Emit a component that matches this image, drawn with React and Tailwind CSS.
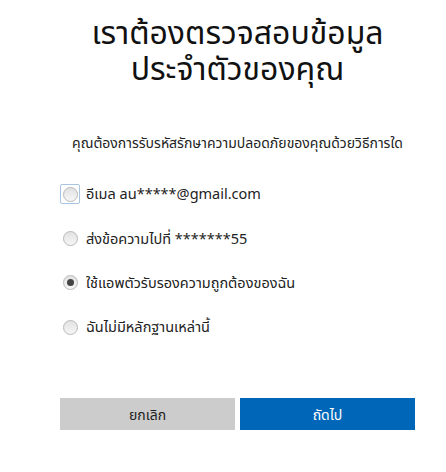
import React, { useState } from "react";

const options = [
  { id: "email", label: "อีเมล au*****@gmail.com" },
  { id: "sms", label: "ส่งข้อความไปที่ *******55" },
  { id: "app", label: "ใช้แอพตัวรับรองความถูกต้องของฉัน" },
  { id: "none", label: "ฉันไม่มีหลักฐานเหล่านี้" },
];

const Radio = ({ checked, focused }) => (
  <span
    className={`flex items-center justify-center w-[20px] h-[20px] ${
      focused ? "border border-[#a9c4e0] rounded-[2px]" : ""
    }`}
  >
    <span className="flex items-center justify-center w-[15px] h-[15px] rounded-full border border-[#b8b8b8] bg-gradient-to-b from-[#e2e2e2] to-[#f6f6f6]">
      {checked && <span className="w-[7px] h-[7px] rounded-full bg-[#444]" />}
    </span>
  </span>
);

export default function App() {
  const [selected, setSelected] = useState("app");

  return (
    <div
      className="w-[446px] h-[472px] bg-white text-[#111]"
      style={{ fontFamily: '"Noto Sans", "Noto Sans Thai", "DejaVu Sans", sans-serif' }}
    >
      <div className="w-[355px] ml-[60px] pt-[14px]">
        {/* Header */}
        <h1 className="text-center text-[32px] leading-[36px] font-normal">
          เราต้องตรวจสอบข้อมูล
          <br />
          ประจำตัวของคุณ
        </h1>

        <p className="mt-[47px] text-center text-[14px] leading-[20px] text-[#222]">
          คุณต้องการรับรหัสรักษาความปลอดภัยของคุณด้วยวิธีการใด
        </p>

        {/* Options */}
        <div className="mt-[31px] flex flex-col gap-[24.4px]">
          {options.map((o, i) => (
            <label
              key={o.id}
              className="flex items-center gap-[6px] h-[20px] cursor-pointer"
              onClick={() => setSelected(o.id)}
            >
              <Radio checked={selected === o.id} focused={i === 0} />
              <span className="text-[14.5px] text-[#222]">{o.label}</span>
            </label>
          ))}
        </div>

        {/* Buttons */}
        <div className="mt-[61px] flex gap-[5px]">
          <button className="flex-1 h-[32px] bg-[#cccccc] text-[14px] text-[#222]">
            ยกเลิก
          </button>
          <button className="flex-1 h-[32px] bg-[#0067b8] text-[14px] text-white">
            ถัดไป
          </button>
        </div>
      </div>
    </div>
  );
}
